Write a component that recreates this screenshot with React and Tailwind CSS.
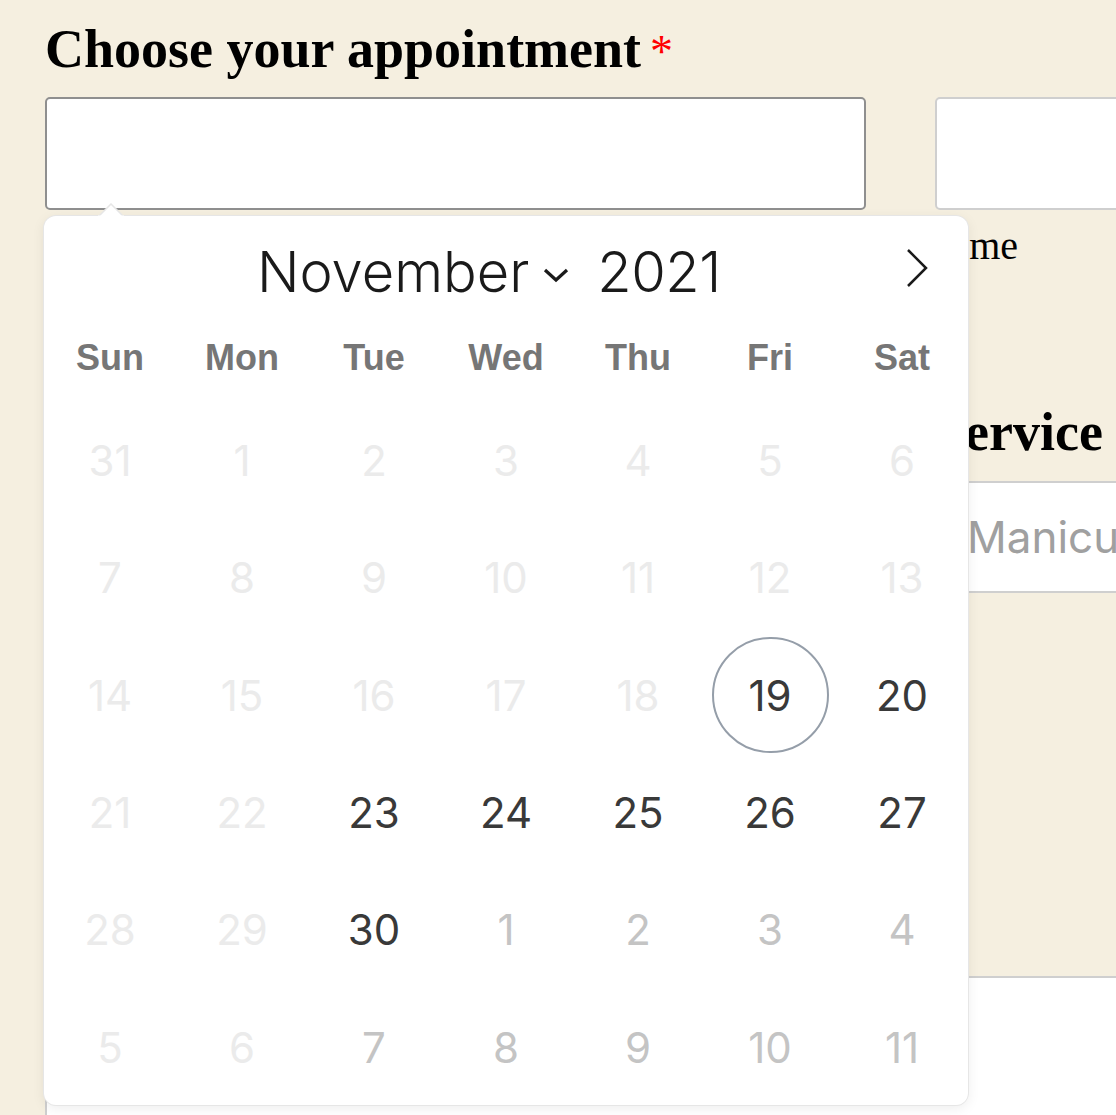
import React from "react";

const rows = [
  [[31, "off"], [1, "off"], [2, "off"], [3, "off"], [4, "off"], [5, "off"], [6, "off"]],
  [[7, "off"], [8, "off"], [9, "off"], [10, "off"], [11, "off"], [12, "off"], [13, "off"]],
  [[14, "off"], [15, "off"], [16, "off"], [17, "off"], [18, "off"], [19, "today"], [20, "on"]],
  [[21, "off"], [22, "off"], [23, "on"], [24, "on"], [25, "on"], [26, "on"], [27, "on"]],
  [[28, "off"], [29, "off"], [30, "on"], [1, "next"], [2, "next"], [3, "next"], [4, "next"]],
  [[5, "off"], [6, "off"], [7, "next"], [8, "next"], [9, "next"], [10, "next"], [11, "next"]],
];

const tone = {
  off: "text-[#ebebeb]",
  on: "text-[#393939]",
  today: "text-[#393939]",
  next: "text-[#c4c4c4]",
};

const weekdays = ["Sun", "Mon", "Tue", "Wed", "Thu", "Fri", "Sat"];

function Calendar() {
  return (
    <div className="absolute left-[44px] top-[216px] w-[924px] h-[889px] bg-white rounded-[12px] shadow-[1px_0_0_#e6e6e6,-1px_0_0_#e6e6e6,0_1px_0_#e6e6e6,0_-1px_0_#e6e6e6,0_3px_13px_rgba(0,0,0,0.08)]">
      {/* arrow pointing at the input */}
      <svg className="absolute left-[54px] top-[-13px]" width="26" height="14" viewBox="0 0 26 14">
        <polygon points="0,14 13,1 26,14" fill="white" stroke="#e6e6e6" strokeWidth="1.5" />
        <rect x="0" y="12.5" width="26" height="2" fill="white" />
      </svg>

      {/* month row */}
      <div className="relative h-[112px] flex items-center pl-[213px] font-['Inter',sans-serif] font-light text-[56px] text-[#1a1a1a]">
        <span>November</span>
        <svg className="ml-[14px] mt-[6px]" width="26" height="16" viewBox="0 0 26 16">
          <polyline points="2,3 13,13 24,3" fill="none" stroke="#1a1a1a" strokeWidth="3.2" />
        </svg>
        <span className="ml-[28px] tracking-[-0.5px]">2021</span>
        <svg className="absolute left-[860px] top-[32px]" width="26" height="40" viewBox="0 0 26 40">
          <polyline points="4,2 22,20 4,38" fill="none" stroke="#1a1a1a" strokeWidth="2.5" />
        </svg>
      </div>

      {/* weekday names */}
      <div className="grid grid-cols-7 h-[60px] items-center font-['Liberation_Sans',Arial,sans-serif] font-bold text-[36px] text-[#767676]">
        {weekdays.map((d) => (
          <span key={d} className="text-center">{d}</span>
        ))}
      </div>

      {/* days */}
      <div className="mt-[14px] grid grid-cols-7 font-['Inter',sans-serif] text-[42px]">
        {rows.flat().map(([n, kind], i) => (
          <div key={i} className="h-[117.3px] flex items-center justify-center">
            {kind === "today" ? (
              <span className="w-[117px] h-[116px] rounded-full border-2 border-[#959ea9] flex items-center justify-center text-[#393939]">
                {n}
              </span>
            ) : (
              <span className={tone[kind]}>{n}</span>
            )}
          </div>
        ))}
      </div>
    </div>
  );
}

export default function App() {
  return (
    <div className="relative w-[1116px] h-[1115px] overflow-hidden bg-[#f5efe0]">
      <div className="w-[1800px] pl-[45px] pt-[17px]">
        <h2 className="h-[64px] font-['Liberation_Serif',serif] font-bold text-[54px] leading-[64px] text-black">
          Choose your appointment
          <span className="ml-[9px] font-normal text-[46px] leading-[0] text-[#ff0000]">*</span>
        </h2>

        <div className="mt-[16px] grid grid-cols-[821px_821px] gap-x-[69px]">
          <div>
            <div className="h-[113px] rounded-[5px] border-2 border-[#8f8f8f] bg-white" />
            <div className="mt-[12px] h-[48px]" />
          </div>
          <div>
            <div className="h-[113px] rounded-[5px] border-2 border-[#cfcfcf] bg-white" />
            <div className="mt-[12px] font-['Liberation_Serif',serif] text-[40px] leading-[48px] text-black">Time</div>
          </div>

          <div className="mt-[130px]">
            <div className="h-[64px]" />
            <div className="mt-[17px] h-[112px] border-y-2 border-[#cfcfcf] bg-white" />
          </div>
          <div className="mt-[130px]">
            <h3 className="font-['Liberation_Serif',serif] font-bold text-[54px] leading-[64px] text-black">Service</h3>
            <div className="mt-[17px] h-[112px] border-y-2 border-[#cfcfcf] bg-white flex items-center pl-[32px] font-['Inter',sans-serif] text-[44px] text-[#a0a0a0]">
              Manicure
            </div>
          </div>
        </div>

        <div className="mt-[302px] h-[64px]" />
        <div className="mt-[17px] h-[240px] border-2 border-[#cfcfcf] rounded-[5px] bg-white" />
      </div>

      <Calendar />
    </div>
  );
}
